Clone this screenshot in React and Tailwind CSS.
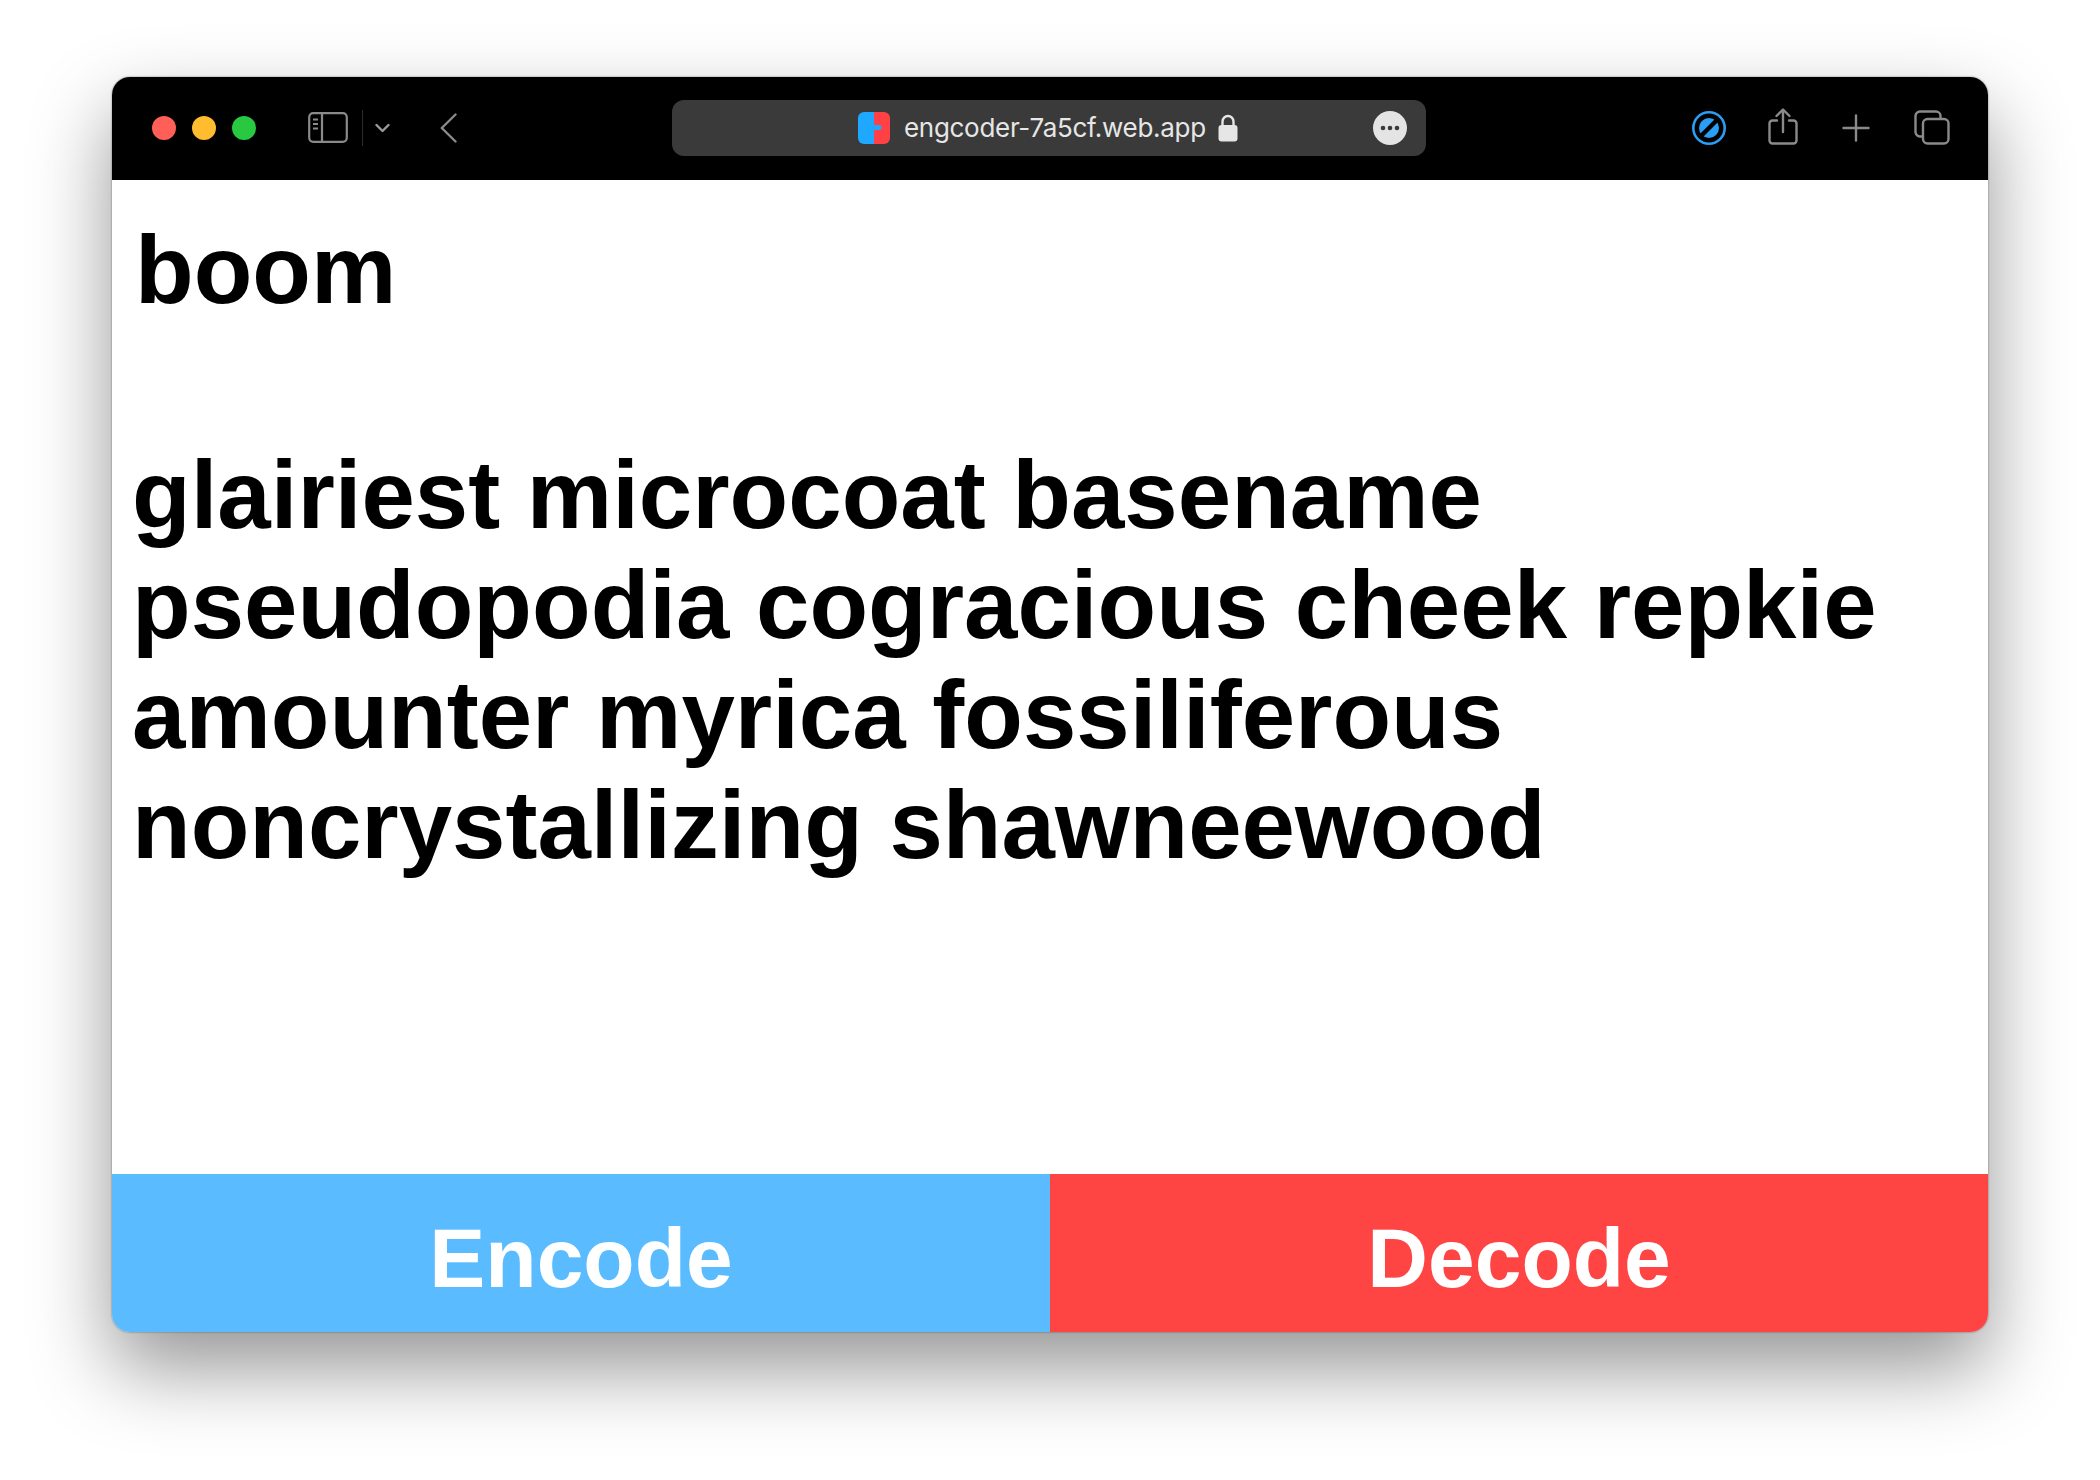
import React from 'react';

const SidebarIcon = () => (
  <svg width="40" height="31" viewBox="0 0 40 31" fill="none" stroke="#8a8a8a" strokeWidth="2.2">
    <rect x="1.2" y="1.2" width="37.6" height="28.6" rx="4" />
    <path d="M14 1.2v28.6" />
    <path d="M5 7.5h5M5 12h5M5 16.5h5" strokeWidth="1.8" />
  </svg>
);

const Chevron = () => (
  <svg width="15" height="10" viewBox="0 0 15 10" fill="none" stroke="#9a9a9a" strokeWidth="2.4" strokeLinecap="round" strokeLinejoin="round">
    <path d="M1.5 2l6 6 6-6" />
  </svg>
);

const BackIcon = () => (
  <svg width="17" height="30" viewBox="0 0 17 30" fill="none" stroke="#8a8a8a" strokeWidth="2.4" strokeLinecap="round" strokeLinejoin="round">
    <path d="M15.5 1.5L1.8 15l13.7 13.5" />
  </svg>
);

const Favicon = () => (
  <svg width="32" height="32" viewBox="0 0 32 32">
    <path d="M6 0h10v32H6a6 6 0 0 1-6-6V6a6 6 0 0 1 6-6z" fill="#1fa8ff" />
    <path d="M16 0h10a6 6 0 0 1 6 6v20a6 6 0 0 1-6 6H16z" fill="#ff4145" />
    <path d="M16 13h5a2.500 2.500 0 0 1 0 5h-5z" fill="#1fa8ff" />
  </svg>
);

const LockIcon = () => (
  <svg width="20" height="28" viewBox="0 0 20 28" fill="none">
    <path d="M4.500 13V7.500a5.500 5.500 0 0 1 11 0V13" stroke="#e6e6e6" strokeWidth="2.4" />
    <rect x="0.500" y="11" width="19" height="16.500" rx="3" fill="#e6e6e6" />
  </svg>
);

const DotsIcon = () => (
  <svg width="34" height="34" viewBox="0 0 34 34">
    <circle cx="17" cy="17" r="17" fill="#e4e4e4" />
    <circle cx="10" cy="17" r="2.300" fill="#3a3a3a" />
    <circle cx="17" cy="17" r="2.300" fill="#3a3a3a" />
    <circle cx="24" cy="17" r="2.300" fill="#3a3a3a" />
  </svg>
);

const ShieldIcon = () => (
  <svg width="34" height="34" viewBox="0 0 34 34" fill="none">
    <circle cx="17" cy="17" r="15.700" stroke="#2a9df4" strokeWidth="2.600" />
    <circle cx="17" cy="17" r="10" fill="#2a9df4" />
    <path d="M7 27L27 7" stroke="#000" strokeWidth="4.500" />
  </svg>
);

const ShareIcon = () => (
  <svg width="30" height="37" viewBox="0 0 30 37" fill="none" stroke="#8a8a8a" strokeWidth="2.400" strokeLinecap="round" strokeLinejoin="round">
    <path d="M9 12.500H4.500a3 3 0 0 0-3 3V32.500a3 3 0 0 0 3 3h21a3 3 0 0 0 3-3V15.500a3 3 0 0 0-3-3H21" />
    <path d="M15 24V2M8.500 8L15 1.500 21.500 8" />
  </svg>
);

const PlusIcon = () => (
  <svg width="28" height="28" viewBox="0 0 28 28" fill="none" stroke="#8a8a8a" strokeWidth="2.400" strokeLinecap="round">
    <path d="M14 1.500v25M1.500 14h25" />
  </svg>
);

const TabsIcon = () => (
  <svg width="36" height="35" viewBox="0 0 36 35" fill="none" stroke="#8a8a8a" strokeWidth="2.400">
    <path d="M8.500 26.500H6a4.500 4.500 0 0 1-4.500-4.500V6A4.500 4.500 0 0 1 6 1.500h16A4.500 4.500 0 0 1 26.500 6v2.500" />
    <rect x="9" y="9" width="25.500" height="24.500" rx="4.500" />
  </svg>
);

const Toolbar = () => (
  <div className="h-[103px] bg-black flex items-center shrink-0 pb-[2px]">
    {/* Traffic lights */}
    <div className="flex items-center gap-4 ml-10">
      <div className="w-6 h-6 rounded-full bg-[#ff5f57]" />
      <div className="w-6 h-6 rounded-full bg-[#febc2e]" />
      <div className="w-6 h-6 rounded-full bg-[#28c840]" />
    </div>

    <div className="flex items-center ml-[52px]">
      <SidebarIcon />
      <div className="w-px h-9 bg-[#2a2a2a] ml-[14px]" />
      <div className="ml-[12px]"><Chevron /></div>
      <div className="ml-[50px]"><BackIcon /></div>
    </div>

    {/* Address bar */}
    <div className="ml-[215px] w-[754px] h-[56px] rounded-xl bg-[#3a3a3a] flex items-center relative">
      <div className="ml-[186px] flex items-center">
        <Favicon />
        <span className="ml-[14px] text-[26px] text-[#e6e6e6] font-['Inter',sans-serif] tracking-[-0.3px] whitespace-nowrap">engcoder-7a5cf.web.app</span>
        <div className="ml-[12px]"><LockIcon /></div>
      </div>
      <div className="absolute right-[19px] top-[11px]"><DotsIcon /></div>
    </div>

    {/* Right side buttons */}
    <div className="flex items-center ml-[266px]">
      <ShieldIcon />
      <div className="ml-[42px] -mt-[3px]"><ShareIcon /></div>
      <div className="ml-[44px]"><PlusIcon /></div>
      <div className="ml-[44px]"><TabsIcon /></div>
    </div>
  </div>
);

export default function App() {
  return (
    <div className="w-[2100px] h-[1480px] bg-white pt-[77px] pl-[112px] font-['Liberation_Sans',Arial,sans-serif] overflow-hidden">
      <div className="w-[1876px] h-[1255px] rounded-[18px] overflow-hidden flex flex-col bg-white shadow-[0_0_2px_rgba(0,0,0,0.5),0_36px_80px_rgba(0,0,0,0.42)]">
        <Toolbar />
        <div className="flex-1 pl-5 pr-4 text-[96px] leading-[110px] font-bold text-black">
          <div className="pl-[3px] pt-[35px]">boom</div>
          <div className="h-[115px]" />
          <div>glairiest microcoat basename</div>
          <div>pseudopodia cogracious cheek repkie</div>
          <div>amounter myrica fossiliferous</div>
          <div>noncrystallizing shawneewood</div>
        </div>
        <div className="flex h-[158px] shrink-0 text-white text-[84px] font-bold">
          <button className="flex-1 bg-[#5bbbff] flex items-center justify-center pt-[10px]">Encode</button>
          <button className="flex-1 bg-[#ff4444] flex items-center justify-center pt-[10px]">Decode</button>
        </div>
      </div>
    </div>
  );
}
